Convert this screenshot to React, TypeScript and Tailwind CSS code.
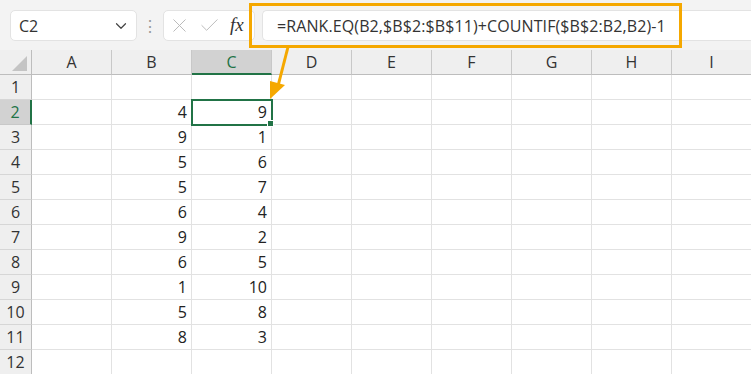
import { Check, ChevronDown, X } from "lucide-react";

const cols = ["A", "B", "C", "D", "E", "F", "G", "H", "I"];

const bVals = [4, 9, 5, 5, 6, 9, 6, 1, 5, 8];
const cVals = [9, 1, 6, 7, 4, 2, 5, 10, 8, 3];

function Cell({ value, row, col }: { value?: number; row: number; col: string }) {
  const selected = row === 2 && col === "C";
  return (
    <div
      className={`relative flex h-[25px] items-center justify-end border-b border-r border-[#e2e2e2] pr-[4px] text-[16px] text-[#222] ${
        selected ? "z-10" : ""
      }`}
    >
      {value ?? ""}
      {selected && (
        <>
          <div className="pointer-events-none absolute -left-[1px] -top-[1px] h-[27px] w-[82px] border-2 border-[#217346]" />
          <div className="absolute -bottom-[3px] -right-[3px] h-[7px] w-[7px] border border-white bg-[#217346]" />
        </>
      )}
    </div>
  );
}

export default function App() {
  return (
    <div className="relative h-[374px] w-[751px] overflow-hidden bg-white font-['Open_Sans',sans-serif]">
      {/* formula bar */}
      <div className="flex h-[50px] items-start bg-[#f3f3f3] pt-[10px]">
        <div className="ml-[10px] flex h-[31px] w-[127px] items-center justify-between rounded-[5px] border border-[#e3e3e3] bg-white pl-[8px] pr-[6px] text-[16px] text-[#333]">
          C2
          <ChevronDown size={18} strokeWidth={1.6} className="text-[#444]" />
        </div>
        <div className="flex h-[31px] w-[26px] items-center justify-center text-[16px] leading-none text-[#999]">
          ⋮
        </div>
        <div className="flex h-[31px] w-[92px] items-center gap-[7px] rounded-[5px] border border-[#e3e3e3] bg-white pl-[4px]">
          <X size={23} strokeWidth={1} className="text-[#b8b8b8]" />
          <Check size={23} strokeWidth={1} className="text-[#b8b8b8]" />
          <span className="ml-[2px] font-['Liberation_Serif',serif] text-[19px] italic text-[#333]">fx</span>
        </div>
        <div className="ml-[7px] flex h-[31px] flex-1 items-center rounded-l-[5px] border border-r-0 border-[#e3e3e3] bg-white pl-[14px] text-[16px] tracking-[0.1px] text-[#333]">
          =RANK.EQ(B2,$B$2:$B$11)+COUNTIF($B$2:B2,B2)-1
        </div>
      </div>

      {/* sheet */}
      <div className="grid grid-cols-[32px_repeat(9,80px)]">
        <div className="relative h-[25px] border-b border-r border-[#bdbdbd] bg-[#efefef]">
          <div className="absolute bottom-[3px] right-[4px] h-0 w-0 border-b-[15px] border-l-[15px] border-b-[#c4c4c4] border-l-transparent" />
        </div>
        {cols.map((c) =>
          c === "C" ? (
            <div
              key={c}
              className="flex h-[25px] items-center justify-center border-b-2 border-r border-b-[#217346] border-r-[#c8c8c8] bg-[#d2d2d2] text-[16px] text-[#217346]"
            >
              {c}
            </div>
          ) : (
            <div
              key={c}
              className="flex h-[25px] items-center justify-center border-b border-r border-b-[#bdbdbd] border-r-[#c8c8c8] bg-[#efefef] text-[16px] text-[#333]"
            >
              {c}
            </div>
          )
        )}
        {Array.from({ length: 12 }).map((_, i) => {
          const row = i + 1;
          const idx = row - 2;
          const hasData = idx >= 0 && idx < bVals.length;
          return [
            row === 2 ? (
              <div
                key={`h${row}`}
                className="flex h-[25px] items-center justify-center border-b border-r-2 border-b-[#c8c8c8] border-r-[#217346] bg-[#d2d2d2] text-[16px] text-[#217346]"
              >
                {row}
              </div>
            ) : (
              <div
                key={`h${row}`}
                className="flex h-[25px] items-center justify-center border-b border-r border-b-[#d6d6d6] border-r-[#bdbdbd] bg-[#efefef] text-[16px] text-[#333]"
              >
                {row}
              </div>
            ),
            ...cols.map((c) => (
              <Cell
                key={`${c}${row}`}
                row={row}
                col={c}
                value={hasData ? (c === "B" ? bVals[idx] : c === "C" ? cVals[idx] : undefined) : undefined}
              />
            )),
          ];
        })}
      </div>

      {/* annotation */}
      <div className="pointer-events-none absolute left-[249px] top-[3px] z-20 h-[45px] w-[433px] border-[3px] border-[#f5a800]" />
      <svg className="pointer-events-none absolute left-0 top-0 z-20" width="751" height="374">
        <line x1="288" y1="47" x2="278" y2="86" stroke="#f5a800" strokeWidth="3" />
        <polygon points="270,99 270,81 285,85" fill="#f5a800" />
      </svg>
    </div>
  );
}
